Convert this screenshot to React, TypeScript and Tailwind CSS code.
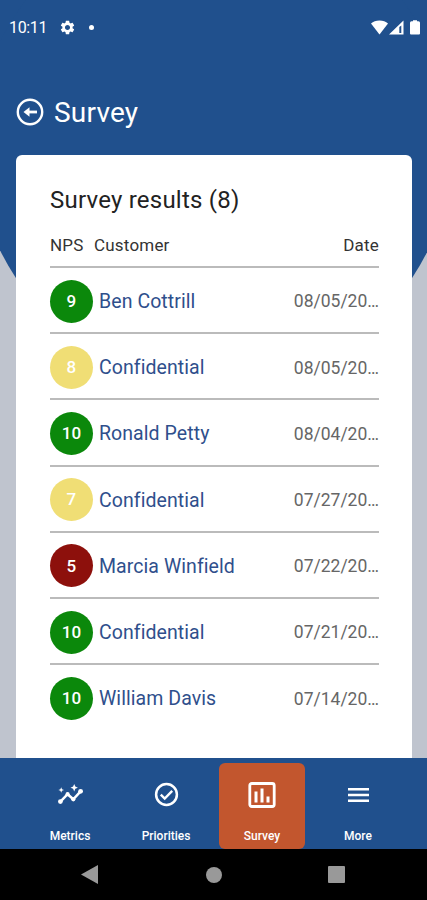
import { MdSettings } from "react-icons/md";

const results = [
  { score: 9, name: "Ben Cottrill", date: "08/05/20…" },
  { score: 8, name: "Confidential", date: "08/05/20…" },
  { score: 10, name: "Ronald Petty", date: "08/04/20…" },
  { score: 7, name: "Confidential", date: "07/27/20…" },
  { score: 5, name: "Marcia Winfield", date: "07/22/20…" },
  { score: 10, name: "Confidential", date: "07/21/20…" },
  { score: 10, name: "William Davis", date: "07/14/20…" },
];

function scoreColor(score: number) {
  if (score >= 9) return "bg-[#0b880b]";
  if (score >= 7) return "bg-[#f0de75]";
  return "bg-[#8d100c]";
}

function StatusBar() {
  return (
    <div className="flex h-[54px] items-center justify-between pl-[9px] pr-[7px] text-white">
      <div className="flex items-center">
        <span className="w-[50px] pt-[2px] text-[16px] leading-none tracking-[-0.35px]">10:11</span>
        <MdSettings className="size-[17px]" />
        <span className="ml-[13px] size-[5px] rounded-full bg-white" />
      </div>
      <div className="flex items-center">
        <svg className="h-[15px] w-[17px]" viewBox="0 0 17 15" fill="currentColor">
          <path d="M0 3.6C2.2 1.700 5 .6 8.500.6S14.800 1.700 17 3.600L8.500 14.500Z" />
        </svg>
        <svg className="ml-px h-[15px] w-[15px]" viewBox="0 0 15 15" fill="currentColor">
          <path fillRule="evenodd" d="M0 14.500 14.500.500V14.500ZM10.300 7V13H12.300V5.400Z" />
        </svg>
        <svg className="ml-[6px] h-[15px] w-[10px]" viewBox="0 0 10 15" fill="currentColor">
          <path d="M3 .3H7V1.200H8.500Q10 1.500 10 2.700V13.500Q10 14.500 9 14.500H1Q0 14.500 0 13.500V2.700Q0 1.500 1.500 1.200H3Z" />
        </svg>
      </div>
    </div>
  );
}

function BackIcon() {
  return (
    <svg className="size-[28px]" viewBox="0 0 28 28" fill="none" stroke="currentColor">
      <circle cx="14" cy="14" r="12.2" strokeWidth="2.4" />
      <path d="M12 14H21" strokeWidth="2.800" />
      <path d="M7.500 14 13.500 9.300V18.700Z" fill="currentColor" stroke="none" />
    </svg>
  );
}

function ResultsCard() {
  return (
    <main className="mx-4 h-[603px] w-[396px] rounded-t-md bg-white pl-[34px] pr-[33px] pt-[30px]">
      <h2 className="text-[24px] leading-[30px] tracking-[0.22px] text-[#222]">
        Survey results (8)
      </h2>
      <div className="mt-[16px] flex h-[35px] text-[17px] leading-[29px] tracking-[0.2px] text-[#333]">
        <span className="w-[44px]">NPS</span>
        <span className="flex-1">Customer</span>
        <span>Date</span>
      </div>
      {results.map((row, i) => (
        <div key={i} className="flex h-[66.2px] items-center border-t-2 border-[#bbb] pt-[2px]">
          <span
            className={`flex size-[43px] items-center justify-center rounded-full pt-px text-[17px] font-medium tracking-[0.2px] text-white ${scoreColor(row.score)}`}
          >
            {row.score}
          </span>
          <span className="ml-[6px] flex-1 pt-px text-[19.5px] tracking-[0.07px] text-[#2f4f8c]">
            {row.name}
          </span>
          <span className="pt-px text-[17.5px] text-[#666]">{row.date}</span>
        </div>
      ))}
    </main>
  );
}

function MetricsIcon() {
  return (
    <svg className="size-[27px]" viewBox="0 0 27 27" fill="currentColor">
      <path d="M3.400 20.600 10.600 13.200 16.300 18.300 23.600 10.300" fill="none" stroke="currentColor" strokeWidth="2.500" />
      <circle cx="3.400" cy="20.600" r="2.400" />
      <circle cx="10.600" cy="13.200" r="2.100" />
      <circle cx="16.300" cy="18.300" r="2.100" />
      <circle cx="23.600" cy="10.300" r="2.400" />
      <path d="M17.200 3 18.300 5.600 20.900 6.700 18.300 7.800 17.200 10.400 16.100 7.800 13.500 6.700 16.100 5.600Z" />
      <path d="M4.200 6.200 5 8.200 7 9 5 9.800 4.200 11.800 3.400 9.800 1.400 9 3.400 8.200Z" />
    </svg>
  );
}

function PrioritiesIcon() {
  return (
    <svg className="size-[25px]" viewBox="0 0 25 25" fill="none" stroke="currentColor">
      <circle cx="12.500" cy="12.500" r="10.400" strokeWidth="2.500" />
      <path d="M6.800 12.600 10.700 16.500 18.200 8.900" strokeWidth="2.400" />
    </svg>
  );
}

function SurveyIcon() {
  return (
    <svg className="h-[26px] w-[28px]" viewBox="0 0 28 26" fill="currentColor">
      <rect x="1.800" y="1.500" width="24.400" height="23" rx="2" fill="none" stroke="currentColor" strokeWidth="2.800" />
      <path d="M6.500 9.500H9.500V20.500H6.500ZM12.500 6.500H15.500V20.500H12.500ZM18.500 14.500H21.500V20.500H18.500Z" />
    </svg>
  );
}

function MenuIcon() {
  return (
    <svg className="h-[14px] w-[21px]" viewBox="0 0 21 14" fill="currentColor">
      <path d="M0 0H21V2.600H0ZM0 5.700H21V8.300H0ZM0 11.400H21V14H0Z" />
    </svg>
  );
}

const tabs = [
  { label: "Metrics", icon: <MetricsIcon /> },
  { label: "Priorities", icon: <PrioritiesIcon /> },
  { label: "Survey", icon: <SurveyIcon />, active: true },
  { label: "More", icon: <MenuIcon /> },
];

function TabBar() {
  return (
    <nav className="flex h-[91px] gap-[10px] bg-[#20508d] pl-[27px] pt-[5px] text-white">
      {tabs.map((tab) => (
        <div
          key={tab.label}
          className={`flex h-[86px] w-[86px] flex-col items-center rounded-md ${tab.active ? "bg-[#c2562e]" : ""}`}
        >
          <div className="flex h-[63px] items-center">{tab.icon}</div>
          <span className="text-[12px] font-medium leading-[20px]">{tab.label}</span>
        </div>
      ))}
    </nav>
  );
}

export default function App() {
  return (
    <div className="relative h-[900px] w-[427px] overflow-hidden bg-[#bfc4ce] font-[Roboto,sans-serif]">
      {/* Rounded blue backdrop behind the header and card */}
      <div className="absolute inset-x-0 top-0 h-[146px] bg-[#20508d]" />
      <div className="absolute -left-[24.5px] -top-[92px] size-[476px] rounded-full bg-[#20508d]" />

      <div className="relative flex h-full flex-col">
        <StatusBar />
        <header className="flex h-[101px] items-center pl-[16px] pt-[15px] text-white">
          <BackIcon />
          <h1 className="ml-[10px] pt-[2px] text-[28px] leading-none tracking-[0.2px]">Survey</h1>
        </header>
        <ResultsCard />
        <TabBar />
        <div className="flex h-[51px] items-center bg-black pl-[81px] text-[#999]">
          <svg className="h-[19px] w-[17px]" viewBox="0 0 17 19" fill="currentColor">
            <path d="M0 9.500 17 0V19Z" />
          </svg>
          <span className="ml-[108px] size-[16px] rounded-full bg-[#999]" />
          <span className="ml-[106px] size-[17px] rounded-[1px] bg-[#999]" />
        </div>
      </div>
    </div>
  );
}
